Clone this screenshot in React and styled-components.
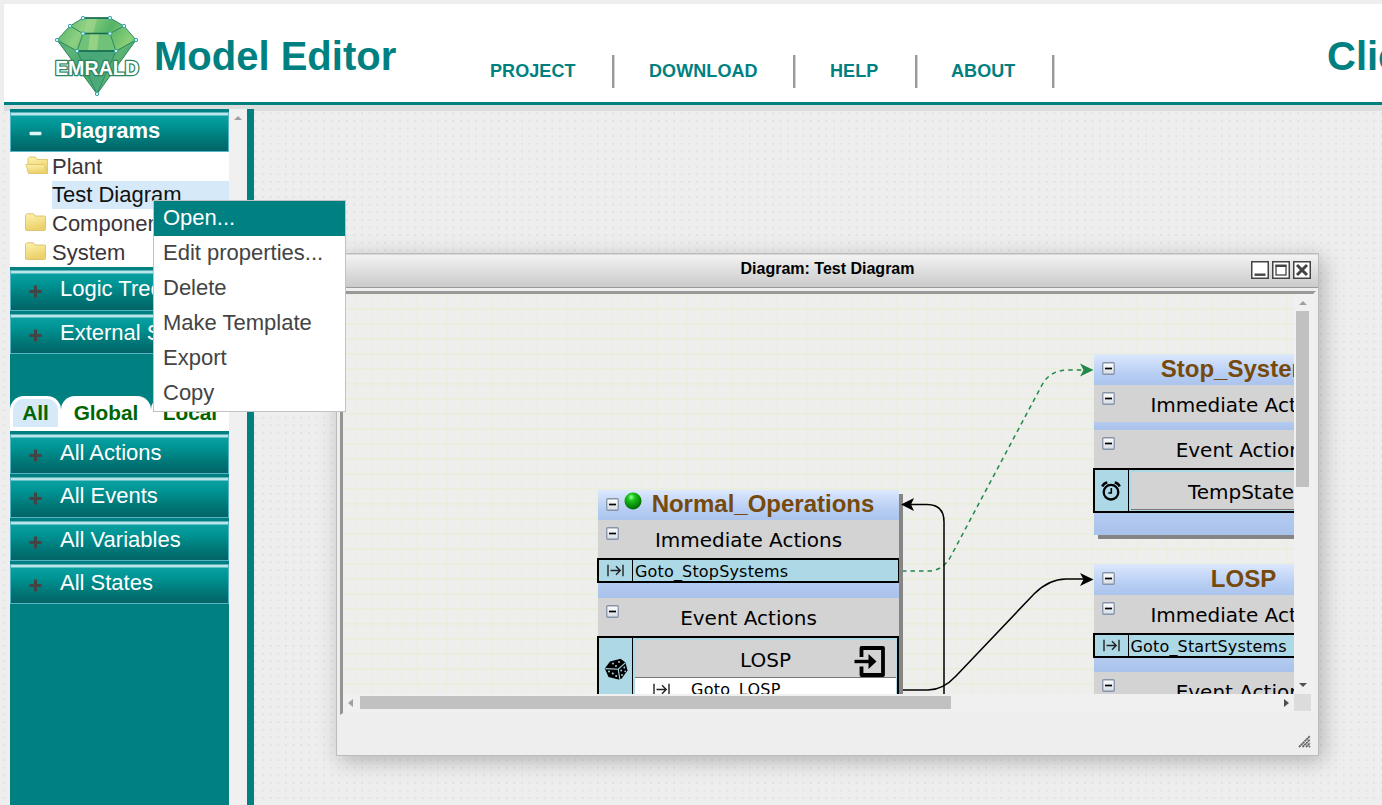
import React from "react";
import styled, { createGlobalStyle } from "styled-components";

const TEAL = "#008080";
const SANS = '"Liberation Sans", Arial, sans-serif';
const WIDE = 'Verdana, "DejaVu Sans", sans-serif';

const GlobalStyle = createGlobalStyle`
  * { box-sizing: border-box; }
  html, body { margin: 0; padding: 0; height: 100%; overflow: hidden; }
  body { font-family: ${SANS}; background: #eee; }
`;

const Page = styled.div`
  position: relative;
  display: flex;
  flex-direction: column;
  width: 1382px;
  height: 805px;
  padding-left: 4px;
  padding-top: 4px;
  overflow: hidden;
  background: radial-gradient(circle, #dedede 0.5px, transparent 1.4px) 0.6px 3px / 7.62px 7.62px #eee;
`;

const Header = styled.header`
  display: flex;
  flex: none;
  height: 101px;
  overflow: hidden;
  background: #fff;
  border-bottom: 3px solid ${TEAL};
  color: ${TEAL};
  white-space: nowrap;
`;

const Strip = styled.div`
  flex: none;
  height: 6px;
  background: #dcdddd;
`;

const LogoSlot = styled.div`
  flex: none;
  width: 150px;
  padding: 8px 0 0 47px;
  svg { display: block; }
`;

const Brand = styled.h1`
  flex: none;
  margin: 0;
  width: 290px;
  font-size: 40px;
  line-height: 46px;
  padding-top: 29px;
`;

const Nav = styled.nav`
  flex: none;
  display: flex;
  padding-top: 51px;
  width: 883px;
`;

const NavItem = styled.a`
  flex: none;
  width: ${(p) => p.$w}px;
  height: 33px;
  padding-left: ${(p) => p.$pad}px;
  border-right: 2px solid #999;
  box-shadow: 1px 0 0 #d4d4d4;
  font-size: 18px;
  letter-spacing: 0.08px;
  font-weight: bold;
  line-height: 32px;
`;

const Body = styled.div`
  display: flex;
  flex: 1;
  min-height: 0;
  margin-top: -2px;
  padding-left: 6px;
`;

const Sidebar = styled.aside`
  width: 219px;
  background: ${TEAL};
`;

const SideScroll = styled.div`
  display: flex;
  justify-content: center;
  width: 18px;
  padding-top: 7px;
  background: #f0f0f0;
`;

const Splitter = styled.div`
  width: 7px;
  background: ${TEAL};
`;

const SectionHead = styled.div`
  display: flex;
  align-items: center;
  height: 40.33px;
  margin-top: 3px;
  padding: 0 0 0 18px;
  border: 1px solid #57b4c6;
  border-top-color: #5fb3b8;
  background: linear-gradient(#b8e6ea 0 2px, #0a9fa0 3px, #009696 30%, #007b7b 65%, #036466 100%);
  color: #fff;
  font-size: 22px;
  font-weight: ${(p) => (p.$open ? "bold" : "normal")};
  white-space: nowrap;
  svg { flex: none; margin: 3px 18px 0 0; }
  span { margin-top: -2px; }
`;

const Tree = styled.div`
  height: 115px;
  background: #fff;
`;

const TreeRow = styled.div`
  display: flex;
  height: 28.4px;
  padding-left: 15px;
  font-size: 22px;
  line-height: 29px;
  color: #3c3438;
  white-space: nowrap;
  svg { flex: none; width: 23px; height: 19px; margin: 4px 4px 0 0; }
`;

const TreeLeaf = styled.div`
  margin-left: 42px;
  height: 28.4px;
  font-size: 22px;
  line-height: 27px;
  color: #111;
  background: #d6e9f8;
`;

const Tabs = styled.div`
  display: flex;
  height: 35px;
  margin-top: 42px;
  border-bottom: 4px solid #fff;
`;

const Tab = styled.div`
  width: ${(p) => p.$w}px;
  padding: 3px 3px 0;
  background: #fff;
  border-radius: 14px 14px 0 0;
  font-size: 20.8px;
  font-weight: bold;
  color: #006400;
  text-align: center;
  span {
    display: block;
    height: 28px;
    line-height: 27px;
    border-radius: 11px 11px 0 0;
    background: ${(p) => (p.$active ? "#d6e9f8" : "transparent")};
  }
`;

const Menu = styled.ul`
  position: absolute;
  left: 153px;
  top: 200px;
  width: 193px;
  margin: 0;
  padding: 0;
  list-style: none;
  background: #fff;
  border: 1px solid #c2c2c2;
`;

const MenuItem = styled.li`
  height: 35px;
  padding-left: 9px;
  font-size: 22px;
  line-height: 33px;
  color: ${(p) => (p.$active ? "#fff" : "#444")};
  background: ${(p) => (p.$active ? TEAL : "transparent")};
`;

const Window = styled.section`
  position: absolute;
  left: 336px;
  top: 253px;
  width: 983px;
  height: 503px;
  display: flex;
  flex-direction: column;
  background: #eee;
  border: 1px solid #bcbcbc;
  box-shadow: 4px 5px 20px rgba(0, 0, 0, 0.25);
`;

const TitleBar = styled.div`
  position: relative;
  flex: none;
  display: flex;
  justify-content: center;
  height: 34px;
  font-size: 16px;
  font-weight: bold;
  line-height: 27px;
  color: #000;
  background: linear-gradient(#f3f3f3, #e2e2e2 40%, #cbcbcb);
  border-top: 1px solid #d6d6d6;
  border-bottom: 1px solid #999;
`;

const WindowButtons = styled.div`
  position: absolute;
  top: 6px;
  right: 7px;
  display: flex;
  gap: 3px;
`;

const Frame = styled.div`
  display: grid;
  grid-template-columns: 951px 19px;
  grid-template-rows: 400px 19px;
  width: 976px;
  margin: 3px 0 0 3px;
  border: 3px solid #999;
  border-left-color: #929592;
  border-right-color: #f0f0f0;
  border-bottom: 2px solid #eee;
  background: #f0f0f0;
`;

const Canvas = styled.div`
  position: relative;
  overflow: hidden;
  background:
    linear-gradient(90deg, transparent 13px, #e9efda 14px, transparent 15px) 0 0 / 15px 15px,
    linear-gradient(transparent 12.5px, #e7edd4 14px, transparent 15px) 0 1px / 15px 15px,
    #eeefec;
`;

const Edges = styled.svg`
  position: absolute;
  left: 0;
  top: 0;
`;

const VScroll = styled.div`
  display: flex;
  flex-direction: column;
  align-items: center;
  justify-content: space-between;
  padding: 7px 3px 7px 1px;
`;

const VThumb = styled.div`
  width: 13px;
  height: 176px;
  margin: 6px 0 auto;
  background: #c1c1c1;
`;

const HScroll = styled.div`
  display: flex;
  align-items: center;
  height: 17px;
  padding: 0 5px;
`;

const HThumb = styled.div`
  width: 591px;
  height: 13px;
  margin: 0 auto 0 7px;
  background: #c1c1c1;
`;

const Corner = styled.div`
  width: 17px;
  height: 17px;
  background: #dcdcdc;
`;

const Footer = styled.div`
  display: flex;
  justify-content: flex-end;
  flex: 1;
  padding: 20px 7px 0 0;
`;

const Node = styled.div`
  position: absolute;
  left: ${(p) => p.$x}px;
  top: ${(p) => p.$y}px;
  width: 301px;
  background: #aec7ee;
  box-shadow: 4px 4px 0 #858585;
`;

const NodeTitle = styled.div`
  display: flex;
  align-items: center;
  height: ${(p) => p.$h || 30}px;
  padding-left: 8px;
  background: linear-gradient(#dce8fd, #b9cff4 60%, #abc4ec);
  font-size: 24px;
  font-weight: bold;
  color: #764a0c;
  strong { flex: 1; text-align: center; padding-right: ${(p) => p.$shift || 0}px; margin-top: -2px; }
  > svg { flex: none; margin-top: -2px; }
`;

const NodeSection = styled.div`
  position: relative;
  height: ${(p) => p.$h || 38}px;
  background: #d3d3d3;
  font-family: ${WIDE};
  font-size: 20px;
  line-height: 40px;
  text-align: center;
  color: #000;
  svg { position: absolute; left: 8px; top: 7px; }
`;

const ActionRow = styled.div`
  display: flex;
  height: 25px;
  margin-left: -1px;
  border: 2px solid #000;
  border-right-width: 1.5px;
  background: #add8e6;
  font-family: ${WIDE};
  font-size: 16px;
  letter-spacing: 0.17px;
  line-height: 23px;
  white-space: nowrap;
`;

const IconCell = styled.div`
  display: flex;
  align-items: center;
  justify-content: center;
  width: 34px;
  padding-bottom: ${(p) => p.$lift || 0}px;
  border-right: 1px solid #000;
  margin-right: 2px;
`;

const Spacer = styled.div`
  height: ${(p) => p.$h}px;
  background: linear-gradient(#b4cbf0, #a9c2ec);
`;

const EventBox = styled.div`
  display: flex;
  height: ${(p) => p.$h}px;
  margin-left: -1px;
  border: 2px solid #000;
  background: #add8e6;
  font-family: ${WIDE};
`;

const EventBody = styled.div`
  flex: 1;
  margin: 2px 1px 0 0;
`;

const EventName = styled.div`
  position: relative;
  height: 38px;
  padding-right: ${(p) => p.$shift || 0}px;
  background: #d3d3d3;
  border-bottom: 1px solid #777;
  font-size: 20px;
  line-height: 40px;
  text-align: center;
  svg { position: absolute; right: 11px; top: 6px; }
`;

const EventAction = styled.div`
  display: flex;
  height: 25px;
  background: #fff;
  font-size: 16px;
  letter-spacing: 0.3px;
  line-height: 24px;
  svg { margin: 5px 21px 0 18px; }
`;

const Tri = ({ d, w, h, fill = "#505050" }) => (
  <svg width={w} height={h} viewBox={`0 0 ${w} ${h}`}>
    <path d={d} fill={fill} />
  </svg>
);

const Sign = ({ open }) => (
  <svg width="13" height="13" viewBox="0 0 13 13">
    {open ? (
      <rect x="0.5" y="4.8" width="12" height="3.4" rx="1" fill="#dff6f6" />
    ) : (
      <path d="M6.5 0.5V12.5M0.5 6.5H12.5" stroke="#444" strokeWidth="3" />
    )}
  </svg>
);

const HiddenDefs = styled.svg`
  position: absolute;
  width: 0;
  height: 0;
`;

const SharedGradients = () => (
  <HiddenDefs>
    <defs>
      <linearGradient id="folder" x1="0" y1="0" x2="0.3" y2="1">
        <stop offset="0" stopColor="#fdf3ae" />
        <stop offset="1" stopColor="#ecd069" />
      </linearGradient>
      <radialGradient id="ball" cx="0.4" cy="0.28" r="0.7">
        <stop offset="0" stopColor="#9dff9d" />
        <stop offset="0.3" stopColor="#19c619" />
        <stop offset="1" stopColor="#006a00" />
      </radialGradient>
      <linearGradient id="mini" x1="0" y1="0" x2="0" y2="1">
        <stop offset="0" stopColor="#fff" />
        <stop offset="1" stopColor="#d5dce4" />
      </linearGradient>
    </defs>
  </HiddenDefs>
);

const Folder = ({ open }) => (
  <svg viewBox="0 0 23 19">
    {open ? (
      <g fill="url(#folder)" stroke="#dfc36a" strokeWidth="0.9">
        <path d="M3 16V2.5L4.5 1H10.5L12 3.5H22.5V16Z" />
        <path d="M1 8.5H19L23 17.5H3.6Z" />
      </g>
    ) : (
      <path
        d="M0.5 16.5V2.2L1.8 0.8H8.5L10 3H19.5Q20.5 3 20.5 4V16.5Q20.5 17.5 19.5 17.5H1.5Q.5 17.5 .5 16.5Z"
        fill="url(#folder)"
        stroke="#d9bf6c"
        strokeWidth="0.9"
      />
    )}
  </svg>
);

const Collapse = () => (
  <svg width="13" height="13" viewBox="0 0 13 13">
    <rect x="0.75" y="0.75" width="11.5" height="11.5" rx="1" fill="url(#mini)" stroke="#8594a8" strokeWidth="1.3" />
    <path d="M3 6.5H10" stroke="#000" strokeWidth="1.7" />
  </svg>
);

const BallSlot = styled.div`
  flex: none;
  height: 18px;
  margin: -9px 0 0 5px;
  svg { display: block; }
`;

const Ball = () => (
  <BallSlot>
    <svg width="18" height="18" viewBox="0 0 18 18">
      <circle cx="9" cy="9" r="8.5" fill="url(#ball)" />
    </svg>
  </BallSlot>
);

const Goto = () => (
  <svg width="17" height="13" viewBox="0 0 17 13">
    <path d="M1 0.8V12.2M16 0.8V12.2M3.5 6.5H13M9 2.2L13.2 6.5L9 10.8" fill="none" stroke="#222" strokeWidth="1.4" />
  </svg>
);

const Dice = () => (
  <svg width="24" height="22" viewBox="0 0 24 22">
    <path d="M.8 10.5L6 3.5L16.500 .8L21.500 4.500L23.500 12.500L17.500 20.800L14.500 21.500L4.500 19Z" fill="#000" />
    <path d="M1.5 10.6L14.2 11.2L21.3 4.9M14.2 11.2L15.8 21" fill="none" stroke="#add8e6" strokeWidth="1.1" />
    <g fill="#add8e6">
      <circle cx="9" cy="5.5" r="0.9" /><circle cx="15" cy="4" r="0.9" /><circle cx="12" cy="8" r="0.9" />
      <circle cx="5" cy="13.5" r="1" /><circle cx="8.8" cy="15.5" r="1" /><circle cx="12.2" cy="18" r="1" />
      <circle cx="17.2" cy="12.5" r="0.9" /><circle cx="20.3" cy="9.5" r="0.9" /><circle cx="18" cy="17" r="0.9" /><circle cx="21.2" cy="13.4" r="0.8" />
    </g>
  </svg>
);

const Clock = () => (
  <svg width="20" height="20" viewBox="0 0 20 20">
    <g fill="none" stroke="#000">
      <circle cx="10" cy="11.2" r="7.3" strokeWidth="2.3" />
      <path d="M10.3 7V12H7.3" strokeWidth="1.6" />
      <path d="M1.300 5.500Q2.800 2.200 6.300 1.600M18.700 5.500Q17.200 2.200 13.700 1.600" strokeWidth="2.500" />
    </g>
  </svg>
);

const Enter = () => (
  <svg width="31" height="31" viewBox="0 0 31 31">
    <path d="M7.5 11V2H29V29H7.5V20.5" fill="none" stroke="#000" strokeWidth="3.8" strokeLinejoin="round" />
    <path d="M0.5 15.5H16" stroke="#000" strokeWidth="3.4" />
    <path d="M14.5 8L22.5 15.5L14.5 23Z" fill="#000" />
  </svg>
);

const WinButton = ({ children }) => (
  <svg width="18" height="18" viewBox="0 0 18 18">
    <rect x="0.75" y="0.75" width="16.5" height="16.5" fill="#fff" stroke="#444" strokeWidth="1.5" />
    {children}
  </svg>
);

const gemPoints = [
  [83, 18], [110, 18], [124, 26], [136, 40], [97, 94], [57, 40], [70, 26], [83, 33.5], [110, 33.5], [77, 51], [116, 51],
];

const Logo = () => (
  <svg width="92" height="88" viewBox="51 12 92 88">
    <defs>
      <linearGradient id="gem" x1="0" y1="0" x2="1" y2="0.6">
        <stop offset="0" stopColor="#4fae68" />
        <stop offset="0.3" stopColor="#8ed081" />
        <stop offset="0.55" stopColor="#55b466" />
        <stop offset="0.8" stopColor="#8bcf78" />
        <stop offset="1" stopColor="#3d9d66" />
      </linearGradient>
    </defs>
    <path d="M83 18H110L124 26L136 40L97 94L57 40L70 26Z" fill="url(#gem)" />
    <path d="M57 40L77 51H116L136 40L97 94Z" fill="#2f9770" opacity="0.5" />
    <path d="M83 33.5H110L116 51H77Z" fill="#6fc277" />
    <path d="M90 33.5H99L97 51H88Z" fill="#a5d98d" opacity="0.7" />
    <path d="M83 33.5L88 19H97L93 33.5Z" fill="#9ed68d" opacity="0.7" />
    <path d="M77 51L97 94L116 51Z" fill="#4aa87c" opacity="0.8" />
    <g fill="none" stroke="#2f8a62" strokeWidth="1">
      <path d="M83 18H110L124 26L136 40L97 94L57 40L70 26Z" />
      <path d="M70 26L83 33.5H110L124 26M83 33.5L77 51H116L110 33.5M57 40L77 51M116 51L136 40M77 51L97 94L116 51" />
    </g>
    <path d="M83 18H110M83 33.5H110M77 51H116" stroke="#15694e" strokeWidth="1.5" />
    <g fill="#d4f3f2" stroke="#3aa5a9" strokeWidth="1">
      {gemPoints.map(([x, y]) => <circle key={`${x}-${y}`} cx={x} cy={y} r="1.7" />)}
    </g>
    <text
      x="55" y="75" textLength="84" lengthAdjust="spacingAndGlyphs"
      fontFamily={SANS} fontSize="20" fontWeight="bold"
      fill="#fff" stroke="#2c8460" strokeWidth="2.6" strokeLinejoin="round" paintOrder="stroke"
    >
      EMRALD
    </text>
  </svg>
);

const Section = ({ label, open }) => (
  <SectionHead $open={open}>
    <Sign open={open} />
    <span>{label}</span>
  </SectionHead>
);

const NAV = [
  ["PROJECT", 170, 46],
  ["DOWNLOAD", 181, 35],
  ["HELP", 122, 35],
  ["ABOUT", 137, 34],
];

const MENU = ["Open...", "Edit properties...", "Delete", "Make Template", "Export", "Copy"];

export default function App() {
  return (
    <Page>
      <GlobalStyle />
      <SharedGradients />
      <Header>
        <LogoSlot><Logo /></LogoSlot>
        <Brand>Model Editor</Brand>
        <Nav>
          {NAV.map(([label, w, pad]) => <NavItem key={label} $w={w} $pad={pad}>{label}</NavItem>)}
        </Nav>
        <Brand as="h2">Click</Brand>
      </Header>
      <Strip />
      <Body>
        <Sidebar>
          <Section label="Diagrams" open />
          <Tree>
            <TreeRow><Folder open />Plant</TreeRow>
            <TreeLeaf>Test Diagram</TreeLeaf>
            <TreeRow><Folder />Component</TreeRow>
            <TreeRow><Folder />System</TreeRow>
          </Tree>
          <Section label="Logic Tree" />
          <Section label="External Sims" />
          <Tabs>
            <Tab $w={51} $active><span>All</span></Tab>
            <Tab $w={90}><span>Global</span></Tab>
            <Tab $w={78}><span>Local</span></Tab>
          </Tabs>
          <Section label="All Actions" />
          <Section label="All Events" />
          <Section label="All Variables" />
          <Section label="All States" />
        </Sidebar>
        <SideScroll><Tri w={8} h={4} d="M0 4L4 0L8 4Z" fill="#a0a0a0" /></SideScroll>
        <Splitter />
      </Body>

      <Window>
        <TitleBar>
          Diagram: Test Diagram
          <WindowButtons>
            <WinButton><path d="M3.5 13.7H14.5" stroke="#444" strokeWidth="2.4" /></WinButton>
            <WinButton>
              <rect x="4" y="4.5" width="10" height="9.5" fill="none" stroke="#444" strokeWidth="1.3" />
              <path d="M3.5 4.8H14.5" stroke="#444" strokeWidth="2.4" />
            </WinButton>
            <WinButton><path d="M4 4L14 14M14 4L4 14" stroke="#444" strokeWidth="3" /></WinButton>
          </WindowButtons>
        </TitleBar>
        <Frame>
          <Canvas>
            <Edges width="951" height="400" viewBox="343 294 951 400">
              <g fill="none" strokeWidth="1.5">
                <path d="M902 571H928Q943 571 951 556L1042 385Q1050 370 1068 370H1082" stroke="#22874b" strokeDasharray="4.5 4" />
                <path d="M902 690H928Q943 690 956 676L1034 594Q1049 579 1066 579H1084" stroke="#000" />
                <path d="M944 700V522Q944 504.500 927 504.500H911" stroke="#000" />
              </g>
              <path d="M1093.500 370L1080 363.500L1083.500 370L1080 376.500Z" fill="#22874b" />
              <path d="M1093.500 579.500L1080 573L1083.500 579.500L1080 586Z" fill="#000" />
            </Edges>

            <Node $x={255} $y={196}>
              <NodeTitle $shift={15}><Collapse /><Ball /><strong>Normal_Operations</strong></NodeTitle>
              <NodeSection><Collapse />Immediate Actions</NodeSection>
              <ActionRow><IconCell><Goto /></IconCell>Goto_StopSystems</ActionRow>
              <Spacer $h={15} />
              <NodeSection><Collapse />Event Actions</NodeSection>
              <EventBox $h={90}>
                <IconCell $lift={24}><Dice /></IconCell>
                <EventBody>
                  <EventName>LOSP<Enter /></EventName>
                  <EventAction><Goto />Goto_LOSP</EventAction>
                </EventBody>
              </EventBox>
            </Node>

            <Node $x={750.5} $y={60}>
              <NodeTitle $h={31} $shift={22}><Collapse /><strong>Stop_Systems</strong></NodeTitle>
              <NodeSection $h={37}><Collapse />Immediate Actions</NodeSection>
              <Spacer $h={8} />
              <NodeSection><Collapse />Event Actions</NodeSection>
              <EventBox $h={45}>
                <IconCell><Clock /></IconCell>
                <EventBody><EventName $shift={40}>TempState</EventName></EventBody>
              </EventBox>
              <Spacer $h={22} />
            </Node>

            <Node $x={750.5} $y={270}>
              <NodeTitle $h={31} $shift={22}><Collapse /><strong>LOSP</strong></NodeTitle>
              <NodeSection><Collapse />Immediate Actions</NodeSection>
              <ActionRow><IconCell><Goto /></IconCell>Goto_StartSystems</ActionRow>
              <Spacer $h={14} />
              <NodeSection><Collapse />Event Actions</NodeSection>
            </Node>

            <Edges width="951" height="400" viewBox="343 294 951 400">
              <path d="M901 504.500L914 498L911 504.500L914 511Z" fill="#000" />
            </Edges>
          </Canvas>
          <VScroll>
            <Tri w={8} h={4} d="M0 4L4 0L8 4Z" fill="#a0a0a0" />
            <VThumb />
            <Tri w={8} h={4} d="M0 0L4 4L8 0Z" />
          </VScroll>
          <HScroll>
            <Tri w={5} h={8} d="M5 0L0 4L5 8Z" fill="#a0a0a0" />
            <HThumb />
            <Tri w={5} h={8} d="M0 0L5 4L0 8Z" />
          </HScroll>
          <Corner />
        </Frame>
        <Footer>
          <svg width="13" height="13" viewBox="0 0 13 13">
            <path d="M1 12L12 1M4.500 12L12 4.500M8 12L12 8M11 12L12 11" stroke="#666" strokeWidth="1.8" strokeDasharray="2.2 0.4" />
          </svg>
        </Footer>
      </Window>

      <Menu>
        {MENU.map((label, i) => <MenuItem key={label} $active={i === 0}>{label}</MenuItem>)}
      </Menu>
    </Page>
  );
}
